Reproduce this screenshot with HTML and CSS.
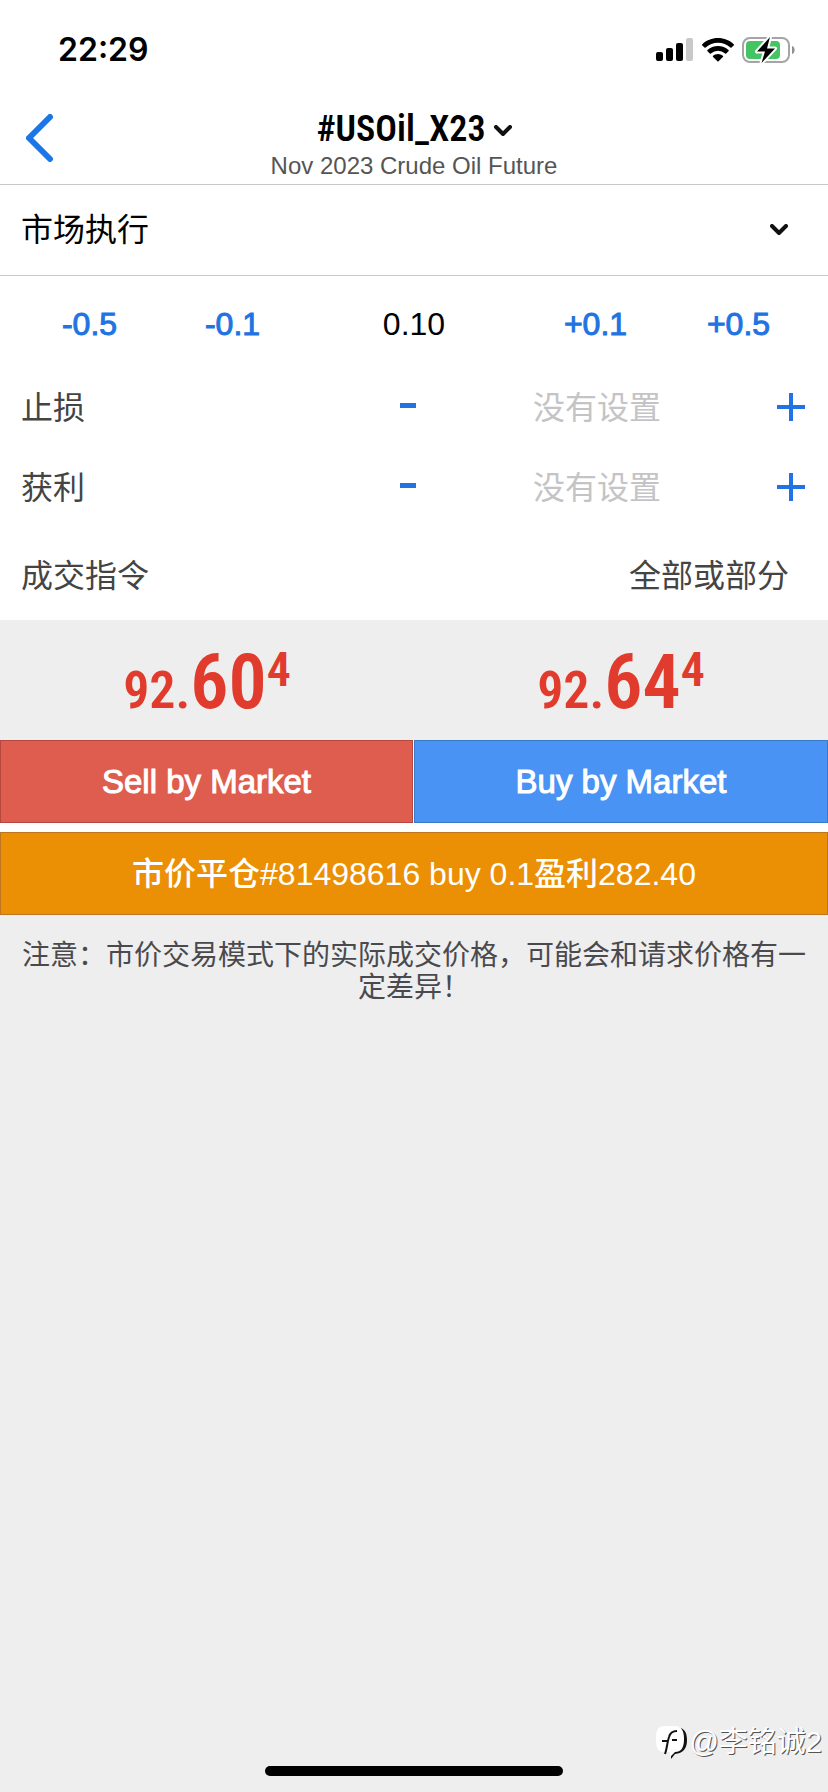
FILE: index.html
```html
<!DOCTYPE html>
<html lang="zh-CN">
<head>
<meta charset="utf-8">
<meta name="viewport" content="width=device-width, initial-scale=1">
<title>#USOil_X23</title>
<link rel="stylesheet" href="styles.css">
</head>
<body class="screen">
<div class="status-bar">
  <time class="clock">22:29</time>
  <div class="status-icons">
    <svg width="38" height="24" viewBox="0 0 38 24" aria-hidden="true">
      <rect x="0" y="14" width="7" height="9" rx="2"/>
      <rect x="10" y="10" width="7" height="13" rx="2"/>
      <rect x="20" y="5" width="7" height="18" rx="2"/>
      <rect x="30" y="0" width="7" height="23" rx="2" fill="#c9c9c9"/>
    </svg>
    <svg width="32" height="24" viewBox="0 0 32 24" aria-hidden="true">
      <path d="M16 0C9.900 0 4.300 2.300.300 6.200a.8.8 0 0 0 0 1.200l2.200 2.200c.3.300.8.300 1.200 0A17.800 17.800 0 0 1 16 4.700c4.700 0 9 1.800 12.300 4.900.4.300.9.300 1.200 0l2.200-2.200a.8.8 0 0 0 0-1.200C27.700 2.300 22.100 0 16 0z"/>
      <path d="M16 8c-4 0-7.700 1.500-10.500 4a.8.8 0 0 0 0 1.200l2.300 2.300c.3.300.8.300 1.100 0a10.600 10.600 0 0 1 14.200 0c.3.300.8.300 1.100 0l2.300-2.300a.8.8 0 0 0 0-1.200C23.700 9.500 20 8 16 8z"/>
      <path d="M16 16c-1.900 0-3.600.7-4.900 1.800a.8.8 0 0 0 0 1.200l4.300 4.300c.3.300.9.300 1.200 0l4.300-4.300a.8.8 0 0 0 0-1.200A7.500 7.500 0 0 0 16 16z"/>
    </svg>
    <svg width="54" height="28" viewBox="0 0 54 28" aria-hidden="true">
      <rect x="1" y="2" width="46" height="24" rx="7" fill="none" stroke="#a5a5a5" stroke-width="2"/>
      <path d="M50 10c3.500 1 3.500 7 0 8z" fill="#8f8f8f"/>
      <rect x="4" y="5" width="34" height="18" rx="4" fill="#45c463"/>
      <path d="M28 1 15 15.500h8L19.500 27 33 12.500h-8z" stroke="#fff" stroke-width="4" stroke-linejoin="round"/>
      <path d="M28 1 15 15.500h8L19.500 27 33 12.500h-8z"/>
    </svg>
  </div>
</div>

<header class="nav">
  <button class="back" type="button" aria-label="返回">
    <svg width="28" height="48" viewBox="0 0 28 48" aria-hidden="true"><path class="stroke back-stroke" d="M24 3 3 24l21 21"/></svg>
  </button>
  <div class="nav-title">
    <button class="symbol" type="button">#USOil_X23
      <svg class="symbol-arrow" width="18" height="12" viewBox="0 0 18 12" aria-hidden="true"><path class="stroke" d="m2 2 7 7 7-7"/></svg>
    </button>
    <div class="subtitle">Nov 2023 Crude Oil Future</div>
  </div>
</header>

<main class="content">
  <form class="order">
    <div class="mode">
      <select class="mode-select" aria-label="交易类型"><option>市场执行</option></select>
      <svg width="18" height="12" viewBox="0 0 18 12" aria-hidden="true"><path class="stroke" d="m2 2 7 7 7-7"/></svg>
    </div>
    <div class="volume">
      <button class="step" type="button">-0.5</button>
      <button class="step" type="button">-0.1</button>
      <input class="volume-input" type="text" value="0.10" aria-label="交易量">
      <button class="step" type="button">+0.1</button>
      <button class="step" type="button">+0.5</button>
    </div>
    <div class="level">
      <label for="sl">止损</label>
      <button class="adjust" type="button" aria-label="减少止损"><svg width="30" height="30" viewBox="0 0 30 30" aria-hidden="true"><path class="blue" d="M7 10h16v5H7z"/></svg></button>
      <input class="level-input" id="sl" type="text" placeholder="没有设置">
      <button class="adjust" type="button" aria-label="增加止损"><svg width="30" height="30" viewBox="0 0 30 30" aria-hidden="true"><path class="blue" d="M1 12h12V0h4v12h12v4H17v12h-4V16H1z"/></svg></button>
    </div>
    <div class="level">
      <label for="tp">获利</label>
      <button class="adjust" type="button" aria-label="减少获利"><svg width="30" height="30" viewBox="0 0 30 30" aria-hidden="true"><path class="blue" d="M7 10h16v5H7z"/></svg></button>
      <input class="level-input" id="tp" type="text" placeholder="没有设置">
      <button class="adjust" type="button" aria-label="增加获利"><svg width="30" height="30" viewBox="0 0 30 30" aria-hidden="true"><path class="blue" d="M1 12h12V0h4v12h12v4H17v12h-4V16H1z"/></svg></button>
    </div>
    <div class="filling"><span>成交指令</span><span>全部或部分</span></div>
  </form>

  <section class="prices">
    <div class="price">92.<span class="big">60</span><span class="pip">4</span></div>
    <div class="price">92.<span class="big">64</span><span class="pip">4</span></div>
  </section>
  <div class="actions">
    <button class="action sell" type="button">Sell by Market</button>
    <button class="action buy" type="button">Buy by Market</button>
    <button class="action close" type="button">市价平仓#81498616 buy 0.1盈利282.40</button>
  </div>
  <p class="note">注意：市价交易模式下的实际成交价格，可能会和请求价格有一定差异！</p>
</main>

<footer class="footer">
  <div class="watermark">
    <svg width="34" height="36" viewBox="0 0 34 36" aria-hidden="true">
      <path d="M20 3C29 3 32 8 32 16c0 9-4 13-12 14l-4 5v-5z" fill="#111"/>
      <path d="M9 2h11c6 0 9 4 9 13s-3 13-9 13l-5 5v-5H9c-6 0-8-4-8-13S3 2 9 2z" fill="#fff"/>
      <path d="M10 30c2-5 2-11 4-17 1-4 3-6 8-6M7 17h6M17 16h5" fill="none" stroke="#111" stroke-width="2"/>
    </svg>
    <span>@李铭诚2</span>
  </div>
  <div class="home-indicator"></div>
</footer>
</body>
</html>
```
FILE: styles.css
```css
*,
*::before,
*::after {
  box-sizing: border-box;
}

.screen {
  margin: 0;
  min-height: 100vh;
  display: flex;
  flex-direction: column;
  background: #eee;
  color: #000;
  font: 32px/40px "Liberation Sans", "Noto Sans CJK SC", sans-serif;
}

button,
input,
select {
  margin: 0;
  padding: 0;
  border: 0;
  border-radius: 0;
  background: none;
  color: inherit;
  font: inherit;
}

svg {
  display: block;
  flex: none;
}

.stroke {
  fill: none;
  stroke: #111;
  stroke-width: 4;
  stroke-linecap: round;
  stroke-linejoin: round;
}

.back-stroke {
  stroke: #1b76e8;
  stroke-width: 6;
}

.blue {
  fill: #2273e2;
}

.status-bar {
  display: flex;
  justify-content: space-between;
  align-items: center;
  height: 100px;
  padding: 0 32px 0 58px;
  background: #fff;
}

.clock {
  font-family: Inter, sans-serif;
  font-weight: 600;
}

.status-icons {
  display: flex;
  align-items: center;
  gap: 8px;
}

.nav {
  display: grid;
  grid-template-columns: 80px 1fr 80px;
  align-items: center;
  height: 85px;
  background: #fff;
  border-bottom: 1px solid #c8c8c8;
}

.back {
  padding: 0 26px 8px;
}

.nav-title {
  padding-top: 7px;
  text-align: center;
}

.symbol {
  display: inline-flex;
  align-items: center;
  gap: 8px;
  font: 600 36px/40px "Roboto Condensed", "Liberation Sans Narrow", Roboto, sans-serif;
}

.symbol-arrow {
  margin-top: 4px;
}

.subtitle {
  color: #555;
  font-size: 24px;
  line-height: 32px;
}

.order {
  background: #fff;
  color: #444;
}

.mode {
  display: grid;
  grid-template-columns: 1fr 18px;
  align-items: center;
  height: 91px;
  padding-right: 40px;
  border-bottom: 1px solid #c8c8c8;
  color: #000;
}

.mode-select {
  grid-area: 1 / 1 / 2 / 3;
  height: 90px;
  padding-left: 21px;
  appearance: none;
}

.mode svg {
  grid-area: 1 / 2;
  pointer-events: none;
}

.volume {
  display: grid;
  grid-template-columns: 143fr 143fr 220fr 143fr 143fr;
  height: 92px;
  padding: 4px 18px 0;
}

.step {
  color: #2273e2;
  -webkit-text-stroke: 1px #2273e2;
}

.volume-input {
  min-width: 0;
  color: #000;
  text-align: center;
}

.level {
  display: grid;
  grid-template-columns: 45% 64px 1fr 74px;
  align-items: center;
  height: 80px;
  padding-left: 21px;
}

.level label {
  margin-right: 10px;
}

.level {
  grid-template-columns: 44% 64px 1fr 74px;
}

.adjust {
  display: grid;
  place-items: center;
  height: 80px;
}

.level-input {
  min-width: 0;
  text-align: center;
}

.level-input::placeholder {
  color: #c4c4c6;
  opacity: 1;
}

.filling {
  display: flex;
  justify-content: space-between;
  align-items: center;
  height: 92px;
  padding: 4px 39px 0 21px;
}

.prices {
  display: grid;
  grid-template-columns: 1fr 1fr;
  height: 120px;
  color: #e03b2c;
  font: 600 52px/1 "Roboto Condensed", "Liberation Sans Narrow", Roboto, sans-serif;
}

.price {
  display: flex;
  align-items: baseline;
  justify-content: center;
  padding-top: 26px;
}

.big {
  font-size: 76px;
  line-height: 72px;
}

.pip {
  align-self: flex-start;
  font-size: 48px;
  line-height: 48px;
}

.actions {
  display: grid;
  grid-template-columns: 1fr 1fr;
  row-gap: 9px;
  background: #fff;
}

.action {
  height: 83px;
  border: 1px solid;
  color: #fff;
}

.sell,
.buy {
  font-size: 33px;
  -webkit-text-stroke: 1px #fff;
}

.sell {
  margin-right: 1px;
  background: #de5d4e;
  border-color: #b5473f;
}

.buy {
  background: #4993f4;
  border-color: #3c78c8;
}

.close {
  grid-column: 1 / 3;
  background: #eb8f04;
  border-color: #bd7620;
  font-weight: 500;
}

.note {
  margin: 0;
  padding: 25px 20px 0;
  color: #4a4a4e;
  font-size: 28px;
  line-height: 32px;
  text-align: center;
}

.footer {
  margin-top: auto;
  padding-bottom: 16px;
}

.watermark {
  display: flex;
  justify-content: flex-end;
  align-items: center;
  height: 48px;
  padding-right: 6px;
  color: #fff;
  font-size: 29px;
  text-shadow: 1px 1px 0 #555;
}

.home-indicator {
  width: 36%;
  height: 10px;
  margin: 0 auto;
  border-radius: 5px;
  background: #000;
}
```
